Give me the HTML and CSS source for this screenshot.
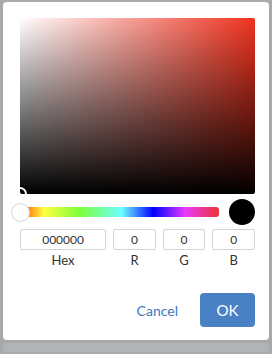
FILE: index.html
```html
<!DOCTYPE html>
<html lang="en">
<head>
    <meta charset="UTF-8">
    <meta name="viewport" content="width=device-width, initial-scale=1.0">
    <title>Color picker</title>
    <link rel="stylesheet" href="styles.css">
</head>
<body>

<div class="backdrop">
    <!-- Color picker dialog -->
    <div class="dialog">
        <div class="sat-panel">
            <span class="sat-cursor"></span>
        </div>

        <div class="hue-row">
            <div class="hue-bar">
                <span class="hue-thumb"></span>
            </div>
            <span class="swatch"></span>
        </div>

        <div class="fields">
            <div class="field field-hex">
                <input type="text" value="000000">
                <label>Hex</label>
            </div>
            <div class="field">
                <input type="text" value="0">
                <label>R</label>
            </div>
            <div class="field">
                <input type="text" value="0">
                <label>G</label>
            </div>
            <div class="field">
                <input type="text" value="0">
                <label>B</label>
            </div>
        </div>

        <div class="actions">
            <button class="btn-cancel">Cancel</button>
            <button class="btn-ok">OK</button>
        </div>
    </div>

    <div class="under-bar"></div>
</div>

</body>
</html>
```

FILE: styles.css
```css
body {
    font-family: Lato, "Liberation Sans", sans-serif;
    background-color: #a9a9a9;
    margin: 0;
    padding: 0;
    width: 272px;
    height: 354px;
    overflow: hidden;
}

.backdrop {
    padding: 2px 3px 0 3px;
    display: flex;
    flex-direction: column;
    gap: 3px;
}

.dialog {
    background-color: #fff;
    border-radius: 4px;
    height: 338px;
    box-sizing: border-box;
    padding: 16px 14px 0 17px;
    display: flex;
    flex-direction: column;
}

.sat-panel {
    position: relative;
    height: 176px;
    border-radius: 2px;
    overflow: hidden;
    background: linear-gradient(to top, #000, rgba(0, 0, 0, 0)),
                linear-gradient(to right, #fff, #f0321e);
}

.sat-cursor {
    position: absolute;
    left: -7px;
    bottom: -7px;
    width: 10px;
    height: 10px;
    border: 2px solid #fff;
    border-radius: 50%;
    box-shadow: 0 0 0 1px #000;
}

.hue-row {
    display: flex;
    align-items: center;
    height: 32px;
    margin-top: 2px;
}

.hue-bar {
    position: relative;
    width: 199px;
    height: 10px;
    border-radius: 3px;
    background: linear-gradient(to right, #ff4000, #ffff40 12%, #7dff3a 30%, #6dffff 51%, #0000ff 67%, #e83bff 83%, #f03333);
}

.hue-thumb {
    position: absolute;
    left: -9px;
    top: -4px;
    width: 17px;
    height: 17px;
    background-color: #fff;
    border: 1px solid #d6d6d6;
    border-radius: 50%;
}

.swatch {
    width: 26px;
    height: 26px;
    border-radius: 50%;
    background-color: #000;
    margin-left: auto;
}

.fields {
    display: flex;
    gap: 7px;
    margin-top: 1px;
}

.field {
    display: flex;
    flex-direction: column;
    align-items: center;
    width: 43px;
}

.field-hex {
    width: 87px;
}

.field input {
    width: 100%;
    height: 21px;
    box-sizing: border-box;
    border: 1px solid #d4d4d4;
    border-radius: 2px;
    text-align: center;
    font-family: inherit;
    font-size: 12px;
    color: #333;
    padding: 0;
}

.field label {
    margin-top: 2px;
    font-size: 13px;
    color: #333;
}

.actions {
    display: flex;
    justify-content: flex-end;
    align-items: center;
    gap: 22px;
    margin-top: 25px;
}

.btn-cancel {
    background: none;
    border: none;
    padding: 0;
    font-family: inherit;
    font-size: 14px;
    color: #3d77bd;
    cursor: pointer;
}

.btn-ok {
    width: 55px;
    height: 34px;
    background-color: #4a80c4;
    border: none;
    border-radius: 4px;
    color: #fff;
    font-family: inherit;
    font-size: 15px;
    cursor: pointer;
}

.under-bar {
    height: 9px;
    border-radius: 4px;
    background-color: #b0b4b9;
}
```
